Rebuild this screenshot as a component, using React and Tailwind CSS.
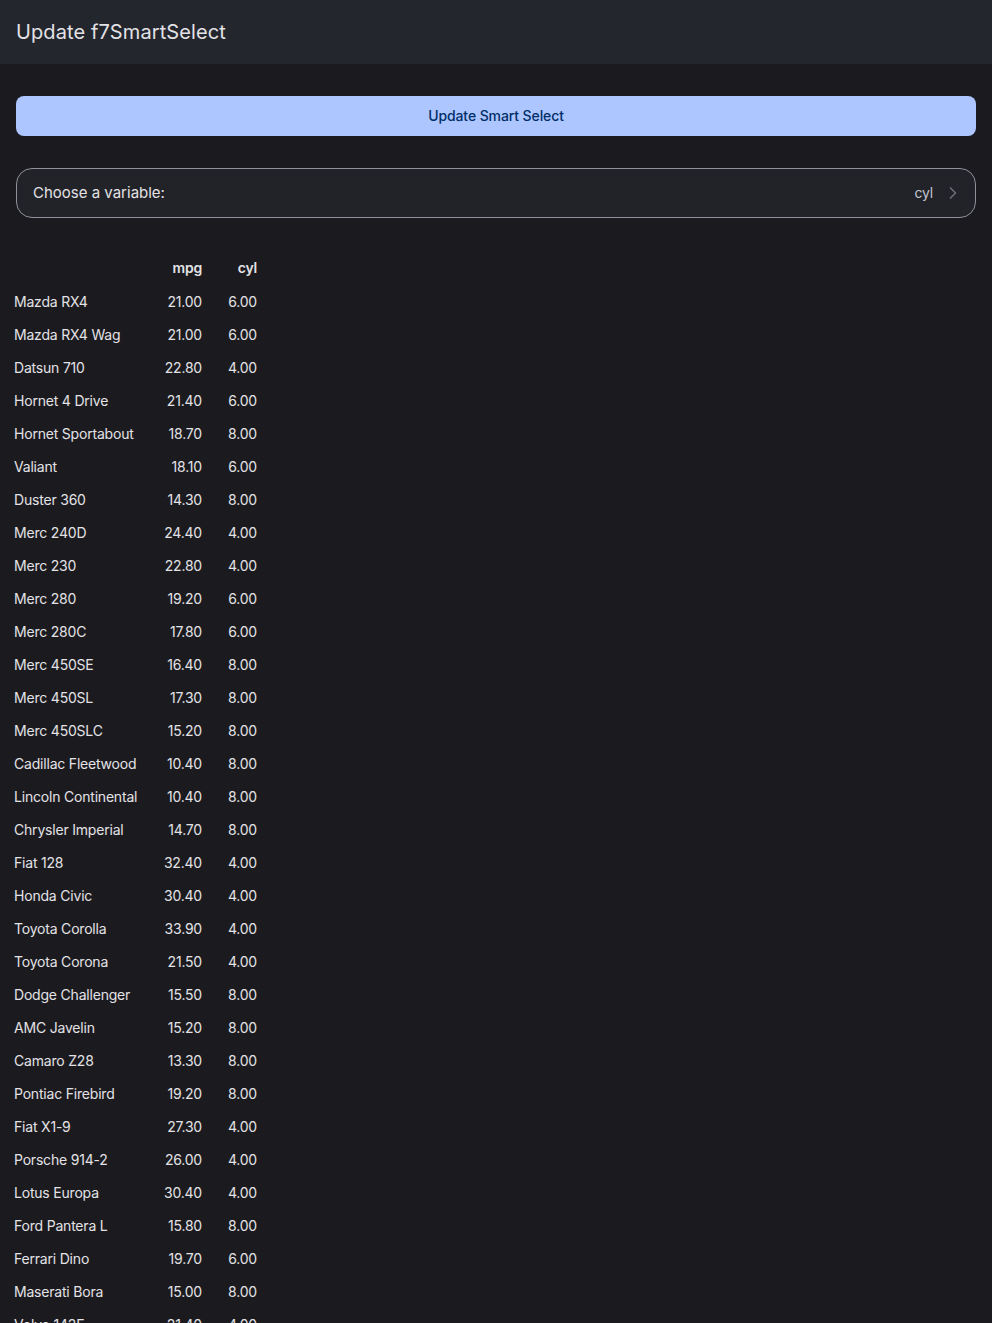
import { ChevronRight } from 'lucide-react';

const cars = [
  ['Mazda RX4', 21.0, 6],
  ['Mazda RX4 Wag', 21.0, 6],
  ['Datsun 710', 22.8, 4],
  ['Hornet 4 Drive', 21.4, 6],
  ['Hornet Sportabout', 18.7, 8],
  ['Valiant', 18.1, 6],
  ['Duster 360', 14.3, 8],
  ['Merc 240D', 24.4, 4],
  ['Merc 230', 22.8, 4],
  ['Merc 280', 19.2, 6],
  ['Merc 280C', 17.8, 6],
  ['Merc 450SE', 16.4, 8],
  ['Merc 450SL', 17.3, 8],
  ['Merc 450SLC', 15.2, 8],
  ['Cadillac Fleetwood', 10.4, 8],
  ['Lincoln Continental', 10.4, 8],
  ['Chrysler Imperial', 14.7, 8],
  ['Fiat 128', 32.4, 4],
  ['Honda Civic', 30.4, 4],
  ['Toyota Corolla', 33.9, 4],
  ['Toyota Corona', 21.5, 4],
  ['Dodge Challenger', 15.5, 8],
  ['AMC Javelin', 15.2, 8],
  ['Camaro Z28', 13.3, 8],
  ['Pontiac Firebird', 19.2, 8],
  ['Fiat X1-9', 27.3, 4],
  ['Porsche 914-2', 26.0, 4],
  ['Lotus Europa', 30.4, 4],
  ['Ford Pantera L', 15.8, 8],
  ['Ferrari Dino', 19.7, 6],
  ['Maserati Bora', 15.0, 8],
  ['Volvo 142E', 21.4, 4],
];

export default function App() {
  return (
    <div className="min-h-[1323px] bg-[#1b1b1f] font-['Inter',sans-serif] text-[#e3e2e6]">
      <div className="flex h-16 items-center bg-[#24262e] px-4">
        <h1 className="text-[20px] leading-none tracking-[0.1px] text-[#e3e2e6]">Update f7SmartSelect</h1>
      </div>

      <div className="px-4 pt-8">
        <button className="flex h-10 w-full items-center justify-center rounded-lg bg-[#adc6ff] text-sm font-medium tracking-[-0.1px] text-[#002e69]">
          Update Smart Select
        </button>

        <div className="mt-8 flex h-[50px] items-center justify-between rounded-2xl border border-[#8f9099] bg-[#222328] pl-4 pr-[12px]">
          <span className="text-[15px] text-[#e3e2e6]">Choose a variable:</span>
          <div className="flex items-center gap-[10px]">
            <span className="text-sm tracking-[-0.2px] text-[#c4c6d0]">cyl</span>
            <ChevronRight size={20} strokeWidth={2} className="text-[#6b6d75]" />
          </div>
        </div>
      </div>

      <table className="ml-[6px] mt-[33px] border-collapse text-sm tracking-[-0.2px]">
        <thead>
          <tr className="h-[33px]">
            <th className="w-[144px] px-2"></th>
            <th className="w-[60px] px-2 text-right font-semibold">mpg</th>
            <th className="w-[55px] px-2 text-right font-semibold">cyl</th>
          </tr>
        </thead>
        <tbody>
          {cars.map(([name, mpg, cyl]) => (
            <tr key={name} className="h-[33px]">
              <td className="whitespace-nowrap px-2 pt-[2px] text-left">{name}</td>
              <td className="px-2 pt-[2px] text-right">{mpg.toFixed(2)}</td>
              <td className="px-2 pt-[2px] text-right">{cyl.toFixed(2)}</td>
            </tr>
          ))}
        </tbody>
      </table>
    </div>
  );
}
